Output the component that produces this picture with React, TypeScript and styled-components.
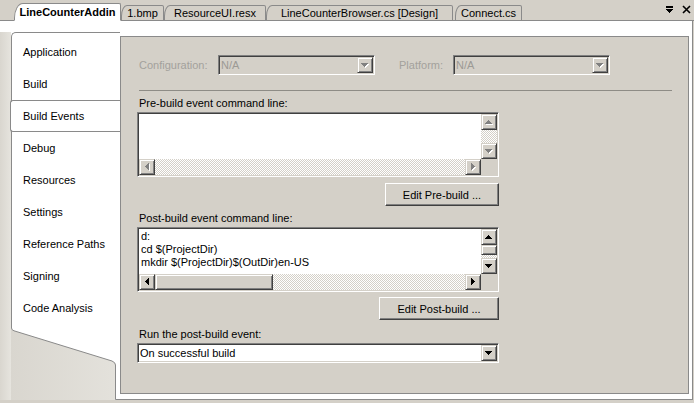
import React from "react";
import styled, { createGlobalStyle, css } from "styled-components";

const GlobalStyle = createGlobalStyle`
  html, body { margin: 0; padding: 0; }
  body {
    width: 694px; height: 403px; overflow: hidden; background: #d4d0c8;
    font-family: "Liberation Sans", Arial, sans-serif; font-size: 11px; color: #000;
  }
  #root { width: 694px; height: 403px; }
`;

const FACE = "#d4d0c8";
const SHADOW = "#808080";
const DARK = "#404040";
const LINE = "#8a8a8a";

const Root = styled.div`
  width: 694px;
  height: 403px;
  display: flex;
  flex-direction: column;
  background: ${FACE};
`;

/* ---------- document tab bar ---------- */
const TabBar = styled.div`
  height: 21px;
  box-sizing: border-box;
  display: flex;
  align-items: flex-end;
  padding-left: 14px;
  background: ${FACE};
  border-bottom: 1px solid ${LINE};
`;

const DocTab = styled.div<{ $active?: boolean; $w: number; $ml?: number }>`
  box-sizing: border-box;
  width: ${(p) => p.$w}px;
  margin-left: ${(p) => p.$ml ?? 0}px;
  height: ${(p) => (p.$active ? 18 : 16)}px;
  margin-bottom: -1px;
  display: flex;
  align-items: center;
  justify-content: center;
  white-space: nowrap;
  border: 1px solid ${LINE};
  border-bottom-color: ${(p) => (p.$active ? "#fff" : LINE)};
  border-top-left-radius: ${(p) => (p.$active ? "9px 15px" : "6px 11px")};
  border-top-right-radius: 2px;
  background: ${(p) => (p.$active ? "#fff" : FACE)};
  font-weight: ${(p) => (p.$active ? 700 : 400)};
  position: relative;
  z-index: ${(p) => (p.$active ? 2 : 1)};
`;

const BarIcons = styled.div`
  margin-left: auto;
  align-self: center;
  display: flex;
  align-items: center;
  gap: 8px;
  padding-right: 3px;
  padding-bottom: 1px;
`;

/* ---------- body frame ---------- */
const Frame = styled.div`
  display: flex;
  width: 693px;
  height: 379px;
`;

const Side = styled.div`
  width: 120px;
  flex: none;
  box-sizing: border-box;
  padding-top: 11px;
  background: #fff;
  display: flex;
`;

const Gutter = styled.div`
  width: 11px;
  flex: none;
  background: linear-gradient(to right, #d9d6cf, #e6e4de);
`;

const StripCol = styled.div`
  width: 109px;
  display: flex;
  flex-direction: column;
`;

const Strip = styled.div`
  height: 295px;
  box-sizing: border-box;
  border-left: 1px solid ${LINE};
  border-top: 1px solid ${LINE};
  border-top-left-radius: 5px;
  padding-top: 3px;
  background: #fff;
`;

const SideTab = styled.div<{ $selected?: boolean }>`
  height: 32px;
  box-sizing: border-box;
  display: flex;
  align-items: center;
  padding-left: 11px;
  white-space: nowrap;
  ${(p) =>
    p.$selected &&
    css`
      margin-left: -2px;
      padding-left: 12px;
      border: 1px solid ${LINE};
      border-right: none;
      border-radius: 3px 0 0 3px;
      background: #fff;
      position: relative;
    `}
`;

const Main = styled.div`
  flex: 1;
  box-sizing: border-box;
  padding: 15px 3px 5px 0;
  border-right: 1px solid ${LINE};
  border-bottom: 1px solid ${LINE};
  background: #fff;
  display: flex;
`;

const Panel = styled.div`
  flex: 1;
  box-sizing: border-box;
  background: ${FACE};
  border: 1px solid ${LINE};
  padding: 18px 0 0 16px;
  display: flex;
  flex-direction: column;
  align-items: flex-start;
`;

const ConfigRow = styled.div`
  display: flex;
  align-items: center;
  height: 20px;
`;

const ConfigLabel = styled.div<{ $w: number; $ml?: number }>`
  box-sizing: border-box;
  width: ${(p) => p.$w}px;
  margin-left: ${(p) => p.$ml ?? 0}px;
  padding-left: 2px;
  color: #a3a19c;
  white-space: nowrap;
`;

const Separator = styled.div`
  margin-top: 15px;
  margin-left: 2px;
  width: 533px;
  border-top: 1px solid #8e8c86;
`;

const FieldLabel = styled.div<{ $mt: number }>`
  margin-top: ${(p) => p.$mt}px;
  height: 13px;
  line-height: 13px;
  padding-left: 2px;
  white-space: nowrap;
`;

const sunken = css`
  box-sizing: border-box;
  border: 1px solid;
  border-color: ${SHADOW} #fff #fff ${SHADOW};
  box-shadow: inset 1px 1px ${DARK}, inset -1px -1px ${FACE};
  padding: 1px;
`;

const raised = css`
  box-sizing: border-box;
  background: ${FACE};
  border: 1px solid;
  border-color: ${FACE} ${DARK} ${DARK} ${FACE};
  box-shadow: inset 1px 1px #fff, inset -1px -1px ${SHADOW};
`;

const TextBox = styled.div`
  ${sunken};
  margin-top: 2px;
  width: 362px;
  height: 65px;
  background: #fff;
  display: grid;
  grid-template-columns: 342px 16px;
  grid-template-rows: 45px 16px;
`;

const TextContent = styled.div`
  background: #fff;
  padding: 1px 2px;
  line-height: 13px;
  white-space: pre;
  overflow: hidden;
`;

const VScroll = styled.div`
  display: flex;
  flex-direction: column;
`;

const HScroll = styled.div`
  display: flex;
`;

const Corner = styled.div`
  background: ${FACE};
`;

const ScrollBtn = styled.div`
  ${raised};
  width: 16px;
  height: 16px;
  flex: none;
  display: flex;
  align-items: center;
  justify-content: center;
`;

const Track = styled.div`
  flex: 1;
  background-color: #fff;
  background-image: repeating-conic-gradient(${FACE} 0 25%, #fff 0 50%);
  background-size: 2px 2px;
`;

const Thumb = styled.div<{ $size: number; $vertical?: boolean }>`
  ${raised};
  flex: none;
  ${(p) => (p.$vertical ? `height: ${p.$size}px;` : `width: ${p.$size}px;`)}
`;

const ButtonRow = styled.div<{ $mt: number }>`
  width: 362px;
  margin-top: ${(p) => p.$mt}px;
  display: flex;
  justify-content: flex-end;
`;

const PushButton = styled.button<{ $w: number }>`
  box-sizing: border-box;
  width: ${(p) => p.$w}px;
  height: 23px;
  padding: 0;
  margin: 0;
  font: inherit;
  color: #000;
  background: ${FACE};
  border: 1px solid;
  border-color: #fff ${DARK} ${DARK} #fff;
  box-shadow: inset -1px -1px ${SHADOW}, inset 1px 1px ${FACE};
  display: flex;
  align-items: center;
  justify-content: center;
`;

const Combo = styled.div<{ $w: number; $disabled?: boolean; $mt?: number }>`
  ${sunken};
  width: ${(p) => p.$w}px;
  height: 20px;
  margin-top: ${(p) => p.$mt ?? 0}px;
  background: ${(p) => (p.$disabled ? FACE : "#fff")};
  display: flex;
`;

const ComboText = styled.div<{ $disabled?: boolean }>`
  flex: 1;
  display: flex;
  align-items: center;
  padding-left: 1px;
  color: ${(p) => (p.$disabled ? "#9c9a95" : "#000")};
  white-space: nowrap;
`;

/* ---------- icons ---------- */
const ARROWS: Record<string, { d: string; w: number; h: number }> = {
  up: { d: "M3 0h1v1h1v1h1v1h1v1H0V3h1V2h1V1h1z", w: 7, h: 4 },
  down: { d: "M0 0h7v1H6v1H5v1H4v1H3V3H2V2H1V1H0z", w: 7, h: 4 },
  left: { d: "M3 0h1v7H3V6H2V5H1V4H0V3h1V2h1V1h1z", w: 4, h: 7 },
  right: { d: "M0 0h1v1h1v1h1v1h1v1H3v1H2v1H1v1H0z", w: 4, h: 7 },
};

function Arrow({ dir, disabled }: { dir: "up" | "down" | "left" | "right"; disabled?: boolean }) {
  const a = ARROWS[dir];
  return (
    <svg width={a.w + 1} height={a.h + 1} viewBox={`0 0 ${a.w + 1} ${a.h + 1}`} shapeRendering="crispEdges">
      {disabled && <path d={a.d} fill="#fff" transform="translate(1 1)" />}
      <path d={a.d} fill={disabled ? SHADOW : "#000"} />
    </svg>
  );
}

function ScrollButton({ dir, disabled }: { dir: "up" | "down" | "left" | "right"; disabled?: boolean }) {
  return (
    <ScrollBtn>
      <Arrow dir={dir} disabled={disabled} />
    </ScrollBtn>
  );
}

function ComboBox({ w, value, disabled, mt }: { w: number; value: string; disabled?: boolean; mt?: number }) {
  return (
    <Combo $w={w} $disabled={disabled} $mt={mt}>
      <ComboText $disabled={disabled}>{value}</ComboText>
      <ScrollButton dir="down" disabled={disabled} />
    </Combo>
  );
}

function MultiLine({ text, disabled }: { text: string; disabled?: boolean }) {
  return (
    <TextBox>
      <TextContent>{text}</TextContent>
      <VScroll>
        <ScrollButton dir="up" disabled={disabled} />
        {!disabled && <Thumb $vertical $size={10} />}
        <Track />
        <ScrollButton dir="down" disabled={disabled} />
      </VScroll>
      <HScroll>
        <ScrollButton dir="left" disabled={disabled} />
        {!disabled && <Thumb $size={118} />}
        <Track />
        <ScrollButton dir="right" disabled={disabled} />
      </HScroll>
      <Corner />
    </TextBox>
  );
}

function StripBottom() {
  const edge = "M0.5 0 V1 Q0.5 3 3 3.8 L101 34 Q104.5 35.5 104.5 38 V72.5 H109";
  return (
    <svg width="109" height="73" viewBox="0 0 109 73" style={{ display: "block" }}>
      <defs>
        <linearGradient id="sb" x1="0" y1="0" x2="1" y2="0">
          <stop offset="0" stopColor="#d9d6cf" />
          <stop offset="1" stopColor="#e4e2dc" />
        </linearGradient>
      </defs>
      <rect width="109" height="73" fill="url(#sb)" />
      <path d="M0.5 0 V1 Q0.5 3 3 3.8 L101 34 Q104.5 35.5 104.5 38 V72 H109 V0 Z" fill="#fff" />
      <path d={edge} fill="none" stroke={LINE} strokeWidth="1" />
    </svg>
  );
}

const sideTabs = [
  "Application",
  "Build",
  "Build Events",
  "Debug",
  "Resources",
  "Settings",
  "Reference Paths",
  "Signing",
  "Code Analysis",
];

const docTabs = [
  { label: "LineCounterAddin", w: 107, active: true },
  { label: "1.bmp", w: 43 },
  { label: "ResourceUI.resx", w: 102 },
  { label: "LineCounterBrowser.cs [Design]", w: 187 },
  { label: "Connect.cs", w: 67, ml: 2 },
];

export default function App() {
  return (
    <Root>
      <GlobalStyle />
      <TabBar>
        {docTabs.map((t) => (
          <DocTab key={t.label} $active={t.active} $w={t.w} $ml={t.ml}>
            {t.label}
          </DocTab>
        ))}
        <BarIcons>
          <svg width="8" height="8" viewBox="0 0 8 8" shapeRendering="crispEdges">
            <rect x="0" y="0" width="7" height="2" fill="#000" />
            <path d="M0 3h7v1H6v1H5v1H4v1H3V6H2V5H1V4H0z" fill="#000" />
          </svg>
          <svg width="9" height="9" viewBox="0 0 9 9">
            <path d="M1 1 L8 8 M8 1 L1 8" stroke="#000" strokeWidth="1.6" />
          </svg>
        </BarIcons>
      </TabBar>
      <Frame>
        <Side>
          <Gutter />
          <StripCol>
            <Strip>
              {sideTabs.map((s) => (
                <SideTab key={s} $selected={s === "Build Events"}>
                  {s}
                </SideTab>
              ))}
            </Strip>
            <StripBottom />
          </StripCol>
        </Side>
        <Main>
          <Panel>
            <ConfigRow>
              <ConfigLabel $w={81}>Configuration:</ConfigLabel>
              <ComboBox w={157} value="N/A" disabled />
              <ConfigLabel $w={56} $ml={22}>Platform:</ConfigLabel>
              <ComboBox w={157} value="N/A" disabled />
            </ConfigRow>
            <Separator />
            <FieldLabel $mt={6}>Pre-build event command line:</FieldLabel>
            <MultiLine text="" disabled />
            <ButtonRow $mt={6}>
              <PushButton $w={114}>Edit Pre-build ...</PushButton>
            </ButtonRow>
            <FieldLabel $mt={6}>Post-build event command line:</FieldLabel>
            <MultiLine text={"d:\ncd $(ProjectDir)\nmkdir $(ProjectDir)$(OutDir)en-US"} />
            <ButtonRow $mt={5}>
              <PushButton $w={120}>Edit Post-build ...</PushButton>
            </ButtonRow>
            <FieldLabel $mt={8}>Run the post-build event:</FieldLabel>
            <ComboBox w={362} value="On successful build" mt={2} />
          </Panel>
        </Main>
      </Frame>
    </Root>
  );
}
